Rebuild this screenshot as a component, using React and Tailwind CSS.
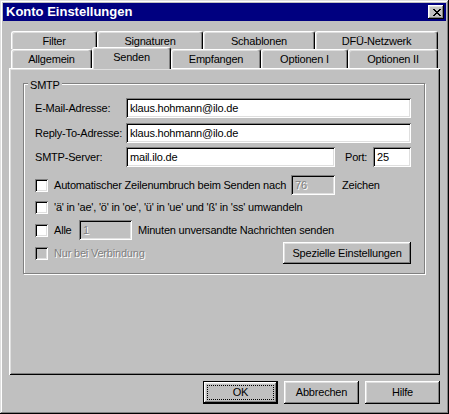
import React from "react";

const raised =
  "shadow-[inset_-1px_-1px_0_#000,inset_1px_1px_0_#fff,inset_-2px_-2px_0_#808080,inset_2px_2px_0_#dfdfdf]";
const sunken =
  "shadow-[inset_1px_1px_0_#808080,inset_-1px_-1px_0_#fff,inset_2px_2px_0_#000,inset_-2px_-2px_0_#dfdfdf]";
const disabledText = "text-[#808080] [text-shadow:1px_1px_0_#fff]";

function CloseGlyph() {
  const rows = [
    "11000011",
    "01100110",
    "00111100",
    "00011000",
    "00111100",
    "01100110",
    "11000011",
  ];
  const rects = [];
  rows.forEach((r, y) =>
    r.split("").forEach((c, x) => {
      if (c === "1") rects.push(<rect key={x + "-" + y} x={x} y={y} width="1" height="1" fill="#000" />);
    })
  );
  return (
    <svg width="8" height="7" viewBox="0 0 8 7" shapeRendering="crispEdges">
      {rects}
    </svg>
  );
}

function Tab({ label, w, selected }) {
  if (selected) {
    return (
      <div
        style={{ width: w }}
        className="relative z-10 -mt-[2px] h-[22px] shrink-0 rounded-t-[3px] border-l border-t border-r border-l-white border-t-white border-r-black bg-[#c0c0c0] shadow-[inset_-1px_0_0_#808080,inset_1px_1px_0_#dfdfdf] flex items-center justify-center pb-[3px]"
      >
        {label}
      </div>
    );
  }
  return (
    <div
      style={{ width: w }}
      className="h-full shrink-0 rounded-t-[3px] border-l border-t border-r border-l-white border-t-white border-r-black shadow-[inset_-1px_0_0_#808080,inset_1px_1px_0_#dfdfdf] flex items-center justify-center pt-[1px]"
    >
      {label}
    </div>
  );
}

function Field({ value, w, disabled }) {
  return (
    <div
      style={{ width: w }}
      className={
        "h-[20px] shrink-0 flex items-center pl-[4px] " +
        sunken +
        (disabled ? " bg-[#c0c0c0] " + disabledText : " bg-white")
      }
    >
      {value}
    </div>
  );
}

function Check({ disabled }) {
  return (
    <div
      className={
        "w-[13px] h-[13px] shrink-0 " + sunken + (disabled ? " bg-[#c0c0c0]" : " bg-white")
      }
    />
  );
}

function Button({ children, w, def, h = 23 }) {
  return (
    <div
      style={{ width: w, height: h }}
      className={
        "relative shrink-0 flex items-center justify-center bg-[#c0c0c0] " +
        (def
          ? "border border-black shadow-[inset_-1px_-1px_0_#000,inset_1px_1px_0_#fff,inset_-2px_-2px_0_#808080,inset_2px_2px_0_#dfdfdf]"
          : raised)
      }
    >
      {def && <div className="absolute inset-[3px] border border-dotted border-black" />}
      <span className="relative">{children}</span>
    </div>
  );
}

export default function App() {
  return (
    <div className="w-[449px] h-[414px] bg-[#c0c0c0] p-[3px] font-['Liberation_Sans',Arial,sans-serif] text-[11px] tracking-[-0.2px] text-black leading-[13px] shadow-[inset_-1px_-1px_0_#000,inset_1px_1px_0_#dfdfdf,inset_-2px_-2px_0_#808080,inset_2px_2px_0_#fff] flex flex-col">
      {/* Title bar */}
      <div className="h-[18px] bg-[#000080] flex items-center justify-between pl-[3px] pr-[2px]">
        <span className="text-white font-bold text-[13px] tracking-normal leading-[16px]">
          Konto Einstellungen
        </span>
        <div className={"w-[16px] h-[14px] bg-[#c0c0c0] flex items-center justify-center pl-px " + raised}>
          <CloseGlyph />
        </div>
      </div>

      {/* Body */}
      <div className="flex flex-col px-[6px] pt-[10px]">
        <div className="flex h-[18px] pl-[2px]">
          <Tab label="Filter" w={86} />
          <Tab label="Signaturen" w={106} />
          <Tab label="Schablonen" w={112} />
          <Tab label="DFÜ-Netzwerk" w={123} />
        </div>
        <div className="flex h-[19px] pl-[2px] items-start">
          <Tab label="Allgemein" w={81} />
          <Tab label="Senden" w={79} selected />
          <Tab label="Empfangen" w={90} />
          <Tab label="Optionen I" w={87} />
          <Tab label="Optionen II" w={90} />
        </div>

        {/* Panel */}
        <div className="h-[307px] shadow-[inset_1px_1px_0_#fff,inset_-1px_-1px_0_#000,inset_2px_2px_0_#dfdfdf,inset_-2px_-2px_0_#808080] pt-[15px] pl-[14px]">
          <div className="relative w-[402px] h-[191px] border border-[#808080] shadow-[inset_1px_1px_0_#fff,1px_1px_0_#fff] pl-[11px]">
            <span className="absolute left-[4px] -top-[5px] bg-[#c0c0c0] px-[2px]">SMTP</span>

            <div className="flex items-center mt-[14px]">
              <span className="w-[91px] shrink-0 whitespace-nowrap">E-Mail-Adresse:</span>
              <Field value="klaus.hohmann@ilo.de" w={285} />
            </div>
            <div className="flex items-center mt-[5px]">
              <span className="w-[91px] shrink-0 whitespace-nowrap">Reply-To-Adresse:</span>
              <Field value="klaus.hohmann@ilo.de" w={285} />
            </div>
            <div className="flex items-center mt-[4px]">
              <span className="w-[91px] shrink-0 whitespace-nowrap">SMTP-Server:</span>
              <Field value="mail.ilo.de" w={209} />
              <span className="ml-[10px] w-[28px] shrink-0">Port:</span>
              <Field value="25" w={38} />
            </div>

            <div className="flex items-center h-[20px] mt-[8px]">
              <Check />
              <span className="ml-[6px] w-[237px] shrink-0 whitespace-nowrap">Automatischer Zeilenumbruch beim Senden nach</span>
              <Field value="76" w={44} disabled />
              <span className="ml-[7px]">Zeichen</span>
            </div>
            <div className="flex items-center h-[20px] mt-[2px]">
              <Check />
              <span className="ml-[6px] whitespace-nowrap">
                'ä' in 'ae', 'ö' in 'oe', 'ü' in 'ue' und 'ß' in 'ss' umwandeln
              </span>
            </div>
            <div className="flex items-center h-[20px] mt-[3px]">
              <Check />
              <span className="ml-[6px] w-[25px] shrink-0">Alle</span>
              <Field value="1" w={53} disabled />
              <span className="ml-[6px]">Minuten unversandte Nachrichten senden</span>
            </div>
            <div className="flex items-center h-[22px] mt-[2px] pr-[13px]">
              <Check disabled />
              <span className={"ml-[6px] " + disabledText}>Nur bei Verbindung</span>
              <div className="ml-auto">
                <Button w={128} h={22}>Spezielle Einstellungen</Button>
              </div>
            </div>
          </div>
        </div>

        {/* Bottom buttons */}
        <div className="flex justify-end gap-[6px] mt-[6px]">
          <Button w={75} def>OK</Button>
          <Button w={75}>Abbrechen</Button>
          <Button w={75}>Hilfe</Button>
        </div>
      </div>
    </div>
  );
}
